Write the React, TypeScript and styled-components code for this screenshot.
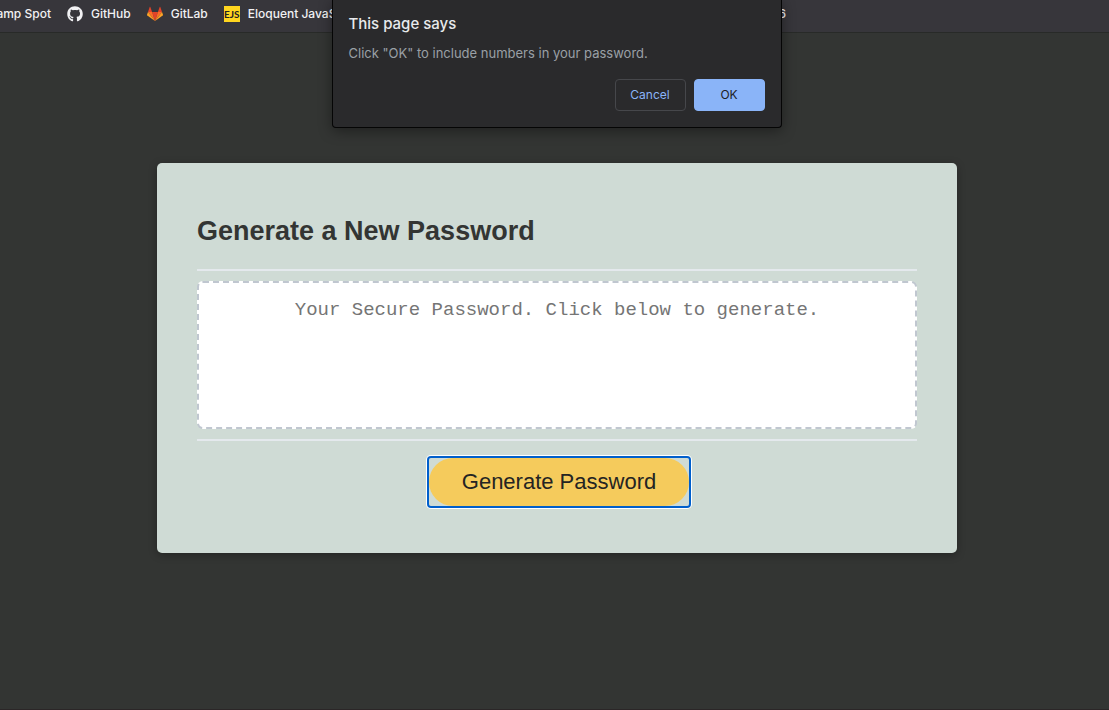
import React from "react";
import styled, { createGlobalStyle } from "styled-components";
import { FaGithub } from "react-icons/fa";

const GlobalStyle = createGlobalStyle`
  *, *::before, *::after { box-sizing: border-box; }
  body {
    margin: 0;
    background: #333533;
    color: #333533;
    font-family: "Liberation Sans", Arial, sans-serif;
  }
`;

const Window = styled.div`
  position: relative;
  display: flex;
  flex-direction: column;
  min-height: 100vh;
  overflow: hidden;
  border-bottom: 1px solid #2b2627;
`;

const BookmarkBar = styled.nav`
  display: flex;
  justify-content: space-between;
  height: 33px;
  padding: 0 323px 5px 0;
  background: #37363b;
  border-bottom: 1px solid #282a28;
  font: 500 12px/16px Inter, sans-serif;
`;

const BookmarkGroup = styled.div`
  display: flex;
  align-items: center;
  gap: 16px;
  margin-left: -37px;
`;

const Bookmark = styled.a`
  display: flex;
  align-items: center;
  gap: 8px;
  color: #f1f1f3;
  text-decoration: none;
  white-space: nowrap;
`;

const EjsBadge = styled.span`
  display: block;
  width: 16px;
  height: 16px;
  background: #ffd61f;
  color: #222;
  font: 700 10px/16px Lato, sans-serif;
  text-align: center;
`;

const Main = styled.main`
  display: flex;
  justify-content: center;
  padding: 130px 0 40px 5px;
`;

const Card = styled.section`
  width: 100%;
  max-width: 800px;
  padding: 40px 40px 47px;
  background: #cfdbd5;
  border-radius: 5px;
  box-shadow: 0 2px 8px rgba(0, 0, 0, 0.3);
`;

const CardTitle = styled.h2`
  margin: 0;
  padding: 12px 0 22px;
  font-size: 27px;
  line-height: 32px;
`;

const CardBody = styled.div`
  padding: 10px 0;
  border: solid #e4e9ed;
  border-width: 2px 0;
`;

const PasswordBox = styled.textarea`
  display: block;
  width: 100%;
  height: 148px;
  padding: 15px;
  border: 2px dashed #c0c7d0;
  border-radius: 6px;
  background: #fff;
  color: #333533;
  font: 19px/24px "Liberation Mono", "Courier New", monospace;
  text-align: center;
  resize: none;

  &::placeholder { color: #757575; }
`;

const CardFooter = styled.div`
  display: flex;
  justify-content: center;
  padding: 17px 0 0 4px;
`;

const GenerateButton = styled.button`
  width: 260px;
  height: 48px;
  border: 0;
  border-radius: 24px;
  background: #f5cb5c;
  color: #242423;
  font: 22px/26px "Liberation Sans", Arial, sans-serif;
`;

const FocusRing = styled.div`
  display: flex;
  border-radius: 2px;
  box-shadow: 0 0 0 2px #005fcc, 0 0 0 3px #fff;
`;

const Dialog = styled.div`
  position: absolute;
  top: 0;
  left: calc(50% + 2px);
  transform: translateX(-50%);
  width: 450px;
  max-width: 100%;
  padding: 14px 16px 16px;
  background: #2a2a2c;
  border: 1px solid #050505;
  border-top: 0;
  border-radius: 0 0 4px 4px;
  box-shadow: 0 3px 14px rgba(0, 0, 0, 0.4);
  font-family: Inter, sans-serif;
`;

const DialogTitle = styled.h1`
  margin: 0 0 9px;
  color: #e8eaed;
  font-size: 15px;
  font-weight: 500;
  line-height: 20px;
`;

const DialogText = styled.p`
  margin: 0 0 16px;
  color: #9aa0a6;
  font-size: 13px;
  font-weight: 400;
  line-height: 20px;
`;

const DialogActions = styled.div`
  display: flex;
  justify-content: flex-end;
  gap: 8px;
`;

const DialogButton = styled.button<{ $primary?: boolean }>`
  width: 71px;
  height: 32px;
  padding: 0;
  border: 1px solid ${(p) => (p.$primary ? "#8ab4f8" : "#46474b")};
  border-radius: 4px;
  background: ${(p) => (p.$primary ? "#8ab4f8" : "transparent")};
  color: ${(p) => (p.$primary ? "#202124" : "#8ab4f8")};
  font: 400 12px/16px Inter, sans-serif;
`;

const GitLabLogo = () => (
  <svg width="16" height="16" viewBox="0 0 16 16" aria-hidden="true">
    <path d="M8 15 5.1 6h5.8Z" fill="#e24329" />
    <path d="M8 15 5.1 6H1Z" fill="#fc6d26" />
    <path d="m1 6-1 2.8c0 .3.1.5.3.7L8 15Z" fill="#fca326" />
    <path d="M1 6h4.1L3.3.9c-.1-.3-.5-.3-.6 0Z" fill="#e24329" />
    <path d="M8 15 10.9 6H15Z" fill="#fc6d26" />
    <path d="m15 6 1 2.8c0 .3-.1.5-.3.7L8 15Z" fill="#fca326" />
    <path d="M15 6h-4.1L12.7.9c.1-.3.5-.3.6 0Z" fill="#e24329" />
  </svg>
);

export default function App() {
  return (
    <Window>
      <GlobalStyle />
      <BookmarkBar aria-label="Bookmarks">
        <BookmarkGroup>
          <Bookmark href="#">Bootcamp Spot</Bookmark>
          <Bookmark href="#"><FaGithub size={16} />GitHub</Bookmark>
          <Bookmark href="#"><GitLabLogo />GitLab</Bookmark>
          <Bookmark href="#"><EjsBadge>EJS</EjsBadge>Eloquent JavaScript</Bookmark>
        </BookmarkGroup>
        <Bookmark href="#">ES6</Bookmark>
      </BookmarkBar>
      <Main>
        <Card>
          <CardTitle id="card-title">Generate a New Password</CardTitle>
          <CardBody>
            <PasswordBox
              readOnly
              aria-labelledby="card-title"
              placeholder="Your Secure Password. Click below to generate."
            />
          </CardBody>
          <CardFooter>
            <FocusRing>
              <GenerateButton type="button">Generate Password</GenerateButton>
            </FocusRing>
          </CardFooter>
        </Card>
      </Main>
      <Dialog role="dialog" aria-labelledby="dialog-title">
        <DialogTitle id="dialog-title">This page says</DialogTitle>
        <DialogText>Click "OK" to include numbers in your password.</DialogText>
        <DialogActions>
          <DialogButton type="button">Cancel</DialogButton>
          <DialogButton type="button" $primary>OK</DialogButton>
        </DialogActions>
      </Dialog>
    </Window>
  );
}
